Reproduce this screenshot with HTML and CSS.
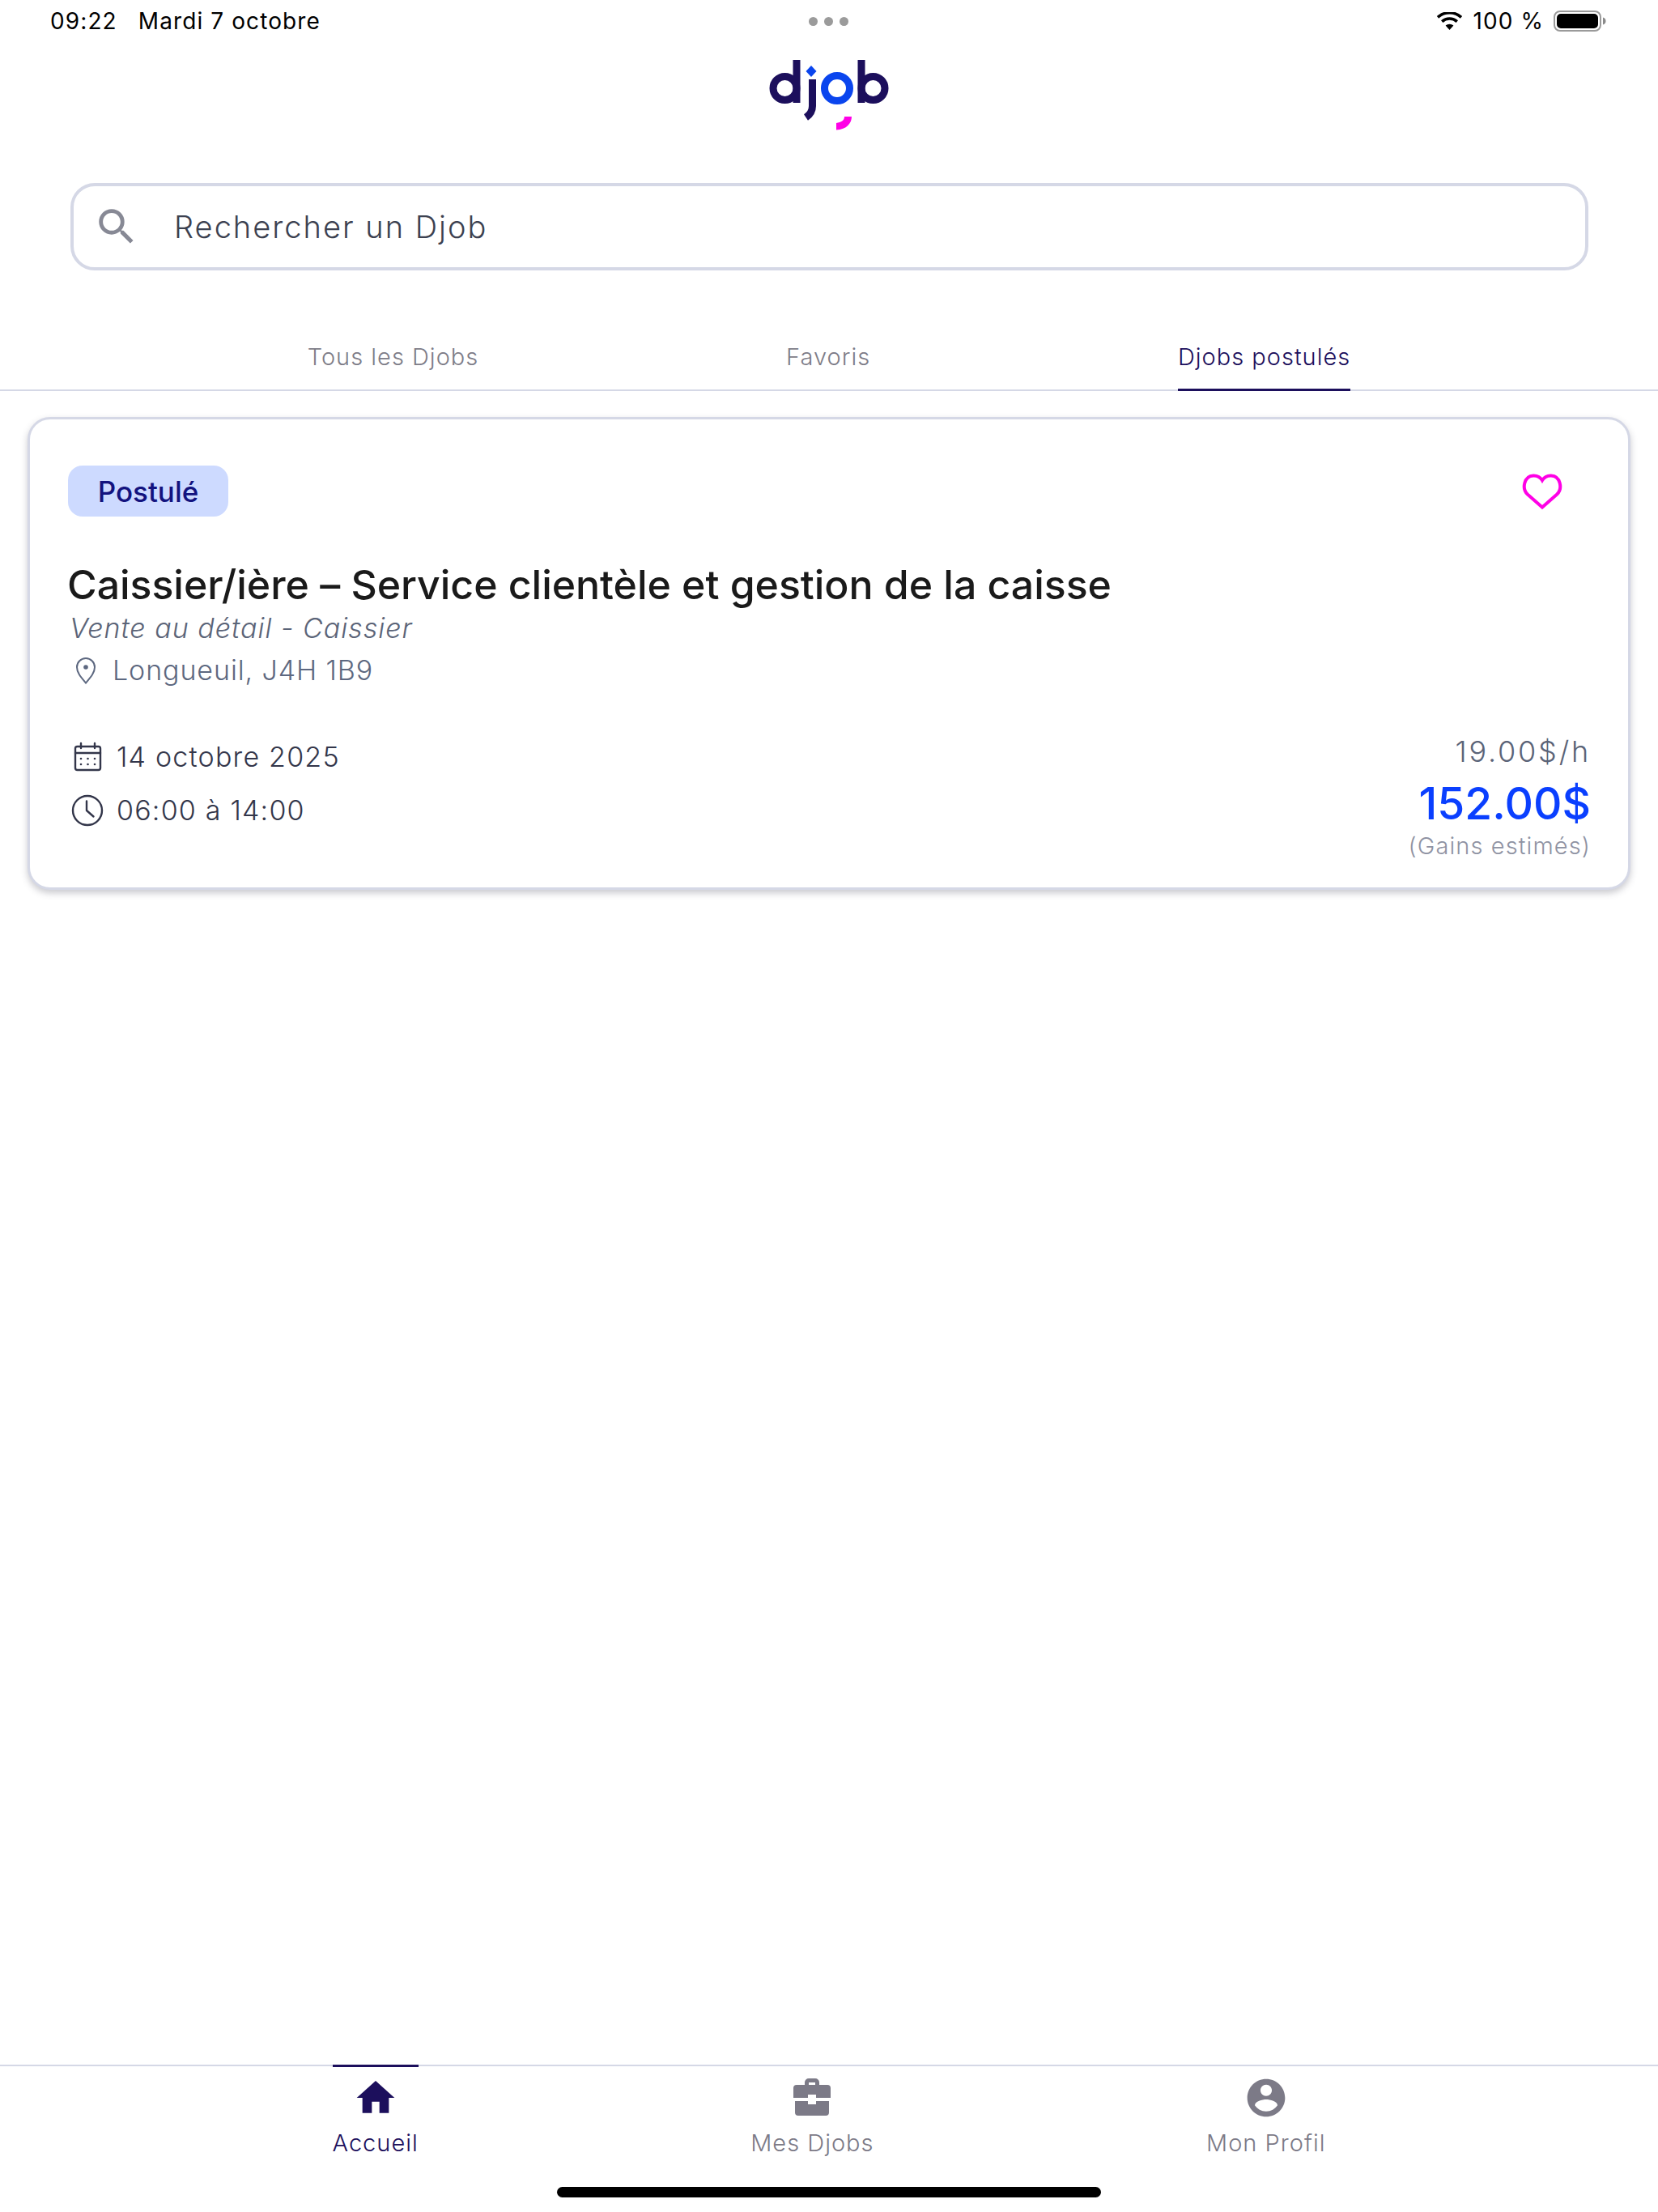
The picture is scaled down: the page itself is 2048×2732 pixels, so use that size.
FILE: index.html
```html
<!DOCTYPE html>
<html lang="fr">
<head>
<meta charset="utf-8">
<title>Djob</title>
<link rel="stylesheet" href="styles.css">
</head>
<body>
<div class="page">
  <div class="status">
    <div class="status-left"><span>09:22</span><span>Mardi 7 octobre</span></div>
    <div class="dots"><i></i><i></i><i></i></div>
    <div class="status-right">
      <svg class="wifi" viewBox="0 0 33 22"><path d="M16.5 22 11.6 16.6a7.4 7.4 0 0 1 9.8 0z" fill="#000"/><path d="M7.2 11.6a14 14 0 0 1 18.6 0" fill="none" stroke="#000" stroke-width="3.6"/><path d="M2 6.4a21.5 21.5 0 0 1 29 0" fill="none" stroke="#000" stroke-width="3.6"/></svg>
      <span>100 %</span>
      <svg class="battery" viewBox="0 0 65 26"><rect x="1" y="1" width="57" height="24" rx="7" fill="#fff" stroke="#9a9a9a" stroke-width="2"/><rect x="4" y="4" width="51" height="18" rx="5" fill="#000"/><path d="M61 8.500c2.500.8 3.500 2.500 3.500 4.500s-1 3.700-3.500 4.500z" fill="#8a8a8a"/></svg>
    </div>
  </div>

  <div class="logo-row">
    <svg class="logo" viewBox="948 70 152 95" fill="none" stroke-width="9">
      <circle cx="969.500" cy="109" r="14.500" stroke="#1c0f5c"/>
      <path d="M984 74v53" stroke="#1c0f5c"/>
      <path d="M1003.500 98v33c0 6-2 10-8 14" stroke="#1c0f5c"/>
      <path d="M1002 81l6.500 7-6.500 7-6.500-7z" fill="#0a45ee" stroke="none"/>
      <circle cx="1034" cy="109" r="15.500" stroke="#0a45ee"/>
      <path d="M1064 74v53" stroke="#1c0f5c"/>
      <circle cx="1078.500" cy="109" r="14.500" stroke="#1c0f5c"/>
      <path d="M1043 144h9c0 8-6 16-19 16.500V152c6-1 10-3 10-8z" fill="#ff00e6" stroke="none"/>
    </svg>
  </div>

  <div class="search">
    <svg class="search-icon" viewBox="0 0 24 24"><path d="M15.500 14h-.79l-.28-.27A6.471 6.471 0 0 0 16 9.500 6.500 6.500 0 1 0 9.500 16c1.610 0 3.090-.59 4.230-1.570l.27.28v.79l5 4.990L20.490 19l-4.990-5zm-6 0C7.010 14 5 11.990 5 9.500S7.010 5 9.500 5 14 7.010 14 9.500 11.990 14 9.500 14z"/></svg>
    <span class="search-text">Rechercher un Djob</span>
  </div>

  <div class="tabs">
    <div class="tab">Tous les Djobs</div>
    <div class="tab">Favoris</div>
    <div class="tab tab-active">Djobs postulés</div>
  </div>

  <main class="content">
    <article class="card">
      <div class="card-top">
        <span class="badge">Postulé</span>
        <svg class="heart" viewBox="0 0 50 46"><path d="M25 42.500 6.800 26.500C-.5 19.500 2.500 4 14 3.500c5-.2 8.800 2.200 11 5.800 2.200-3.600 6-6 11-5.800 11.500.5 14.500 16 7.200 23z"/></svg>
      </div>
      <h1 class="title">Caissier/ière – Service clientèle et gestion de la caisse</h1>
      <div class="subtitle">Vente au détail - Caissier</div>
      <div class="location">
        <svg class="pin" viewBox="0 0 26 34"><path d="M13 32.500C7 25.500 2 20 2 13a11 11 0 0 1 22 0c0 7-5 12.500-11 19.500z"/><circle cx="13" cy="13" r="2.800" class="pin-dot"/></svg>
        <span>Longueuil, J4H 1B9</span>
      </div>
      <div class="card-bottom">
        <div class="when">
          <div class="when-row">
            <svg class="when-icon" viewBox="0 0 40 36"><g class="line-icon"><rect x="5" y="5" width="31" height="29" rx="2.500"/><path d="M5 13h31M12 1v6M29 1v6"/></g><g class="cal-dots"><circle cx="12" cy="20" r="1.300"/><circle cx="20.500" cy="20" r="1.300"/><circle cx="29" cy="20" r="1.300"/><circle cx="12" cy="27" r="1.300"/><circle cx="20.500" cy="27" r="1.300"/><circle cx="29" cy="27" r="1.300"/></g></svg>
            <span>14 octobre 2025</span>
          </div>
          <div class="when-row">
            <svg class="when-icon" viewBox="0 0 40 40"><g class="line-icon"><circle cx="20" cy="20" r="18"/><path d="M19 8.500V20l8.500 7.500"/></g></svg>
            <span>06:00 à 14:00</span>
          </div>
        </div>
        <div class="pay">
          <div class="rate">19.00$/h</div>
          <div class="total">152.00$</div>
          <div class="est">(Gains estimés)</div>
        </div>
      </div>
    </article>
  </main>

  <nav class="nav">
    <div class="nav-item nav-active">
      <svg class="nav-icon" viewBox="0 0 24 24"><path d="M10 20v-6h4v6h5v-8h3L12 3 2 12h3v8z"/></svg>
      <span>Accueil</span>
    </div>
    <div class="nav-item">
      <svg class="nav-icon" viewBox="0 0 56 56"><path d="M19 12V9a5 5 0 0 1 5-5h8a5 5 0 0 1 5 5v3h10a4 4 0 0 1 4 4v12H33v-4h-10v4H5V16a4 4 0 0 1 4-4zm5 0h8V9h-8z" fill-rule="evenodd"/><path d="M7 32h16v4h10v-4h16v14a4 4 0 0 1-4 4H11a4 4 0 0 1-4-4z"/></svg>
      <span>Mes Djobs</span>
    </div>
    <div class="nav-item">
      <svg class="nav-icon" viewBox="0 0 24 24"><path d="M12 2C6.480 2 2 6.480 2 12s4.480 10 10 10 10-4.480 10-10S17.520 2 12 2zm0 3c1.660 0 3 1.340 3 3s-1.340 3-3 3-3-1.340-3-3 1.340-3 3-3zm0 14.200c-2.500 0-4.710-1.280-6-3.220.03-1.990 4-3.080 6-3.080 1.990 0 5.970 1.090 6 3.080-1.290 1.940-3.500 3.220-6 3.220z"/></svg>
      <span>Mon Profil</span>
    </div>
  </nav>
  <div class="home-indicator"></div>
</div>
</body>
</html>
```

FILE: styles.css
```css
* { box-sizing: border-box; }
html, body { margin: 0; background: #fff; }
body { font-family: Inter, "Noto Sans", sans-serif; }

.page {
  position: relative;
  width: 2048px;
  height: 2732px;
  display: flex;
  flex-direction: column;
  overflow: hidden;
}

/* status bar */
.status {
  height: 52px;
  padding: 0 64px 0 62px;
  display: grid;
  grid-template-columns: 1fr auto 1fr;
  align-items: center;
  color: #000;
  font-size: 28px;
}
.status-left { display: flex; gap: 26px; letter-spacing: 1.100px; }
.dots { display: flex; gap: 8px; }
.dots i { width: 11px; height: 11px; border-radius: 50%; background: #9b9b9b; }
.status-right { display: flex; justify-content: flex-end; align-items: center; gap: 12px; letter-spacing: 1.100px; }
.wifi { width: 33px; height: 22px; }
.battery { width: 65px; height: 26px; }

/* logo */
.logo-row { display: flex; justify-content: center; padding-top: 18px; }
.logo { width: 152px; height: 95px; display: block; }

/* search */
.search {
  margin: 61px 86px 0 87px;
  height: 108px;
  border: 4px solid #d5d8e6;
  border-radius: 30px;
  display: flex;
  align-items: center;
  padding-left: 24px;
  gap: 42px;
}
.search-icon { width: 58px; height: 58px; fill: #878995; flex: none; }
.search-text { font-size: 38px; font-weight: 300; letter-spacing: 2px; color: #3c4150; }

/* tabs */
.tabs {
  margin-top: 70px;
  height: 79px;
  display: flex;
  justify-content: space-evenly;
  border-bottom: 2px solid #d5d8e6;
}
.tab {
  font-size: 29px;
  font-weight: 300;
  letter-spacing: 1px;
  color: #7e7d88;
  padding-top: 19px;
  margin-bottom: -2px;
  border-bottom: 3px solid transparent;
}
.tab-active { color: #1c0f5c; border-bottom-color: #1c0f5c; }

/* card */
.content { flex: 1; padding: 32px 34px 0 34px; }
.card {
  height: 584px;
  border: 3px solid #d5d8e6;
  border-radius: 28px;
  box-shadow: 0 4px 8px rgba(60, 60, 80, .28);
  background: #fff;
  padding: 57px 46px 0 46px;
}
.card-top { display: flex; justify-content: space-between; align-items: center; padding-right: 35px; }
.badge {
  width: 198px;
  height: 63px;
  margin-left: 1px;
  border-radius: 18px;
  background: #cddaff;
  color: #13137f;
  font-size: 35px;
  font-weight: 500;
  display: flex;
  align-items: center;
  justify-content: center;
}
.heart { width: 50px; height: 46px; fill: none; stroke: #ff00e6; stroke-width: 4; }
.title {
  margin: 54px 0 0;
  font-size: 50px;
  line-height: 60px;
  letter-spacing: -.04px;
  font-weight: 500;
  color: #1a1a1a;
}
.subtitle {
  margin-top: 2px;
  font-size: 34px;
  font-weight: 300;
  line-height: 44px;
  font-style: italic;
  letter-spacing: 1px;
  color: #5b6478;
  padding-left: 3px;
}
.location {
  margin-top: 8px;
  display: flex;
  align-items: center;
  gap: 20px;
  font-size: 34px;
  font-weight: 300;
  line-height: 44px;
  letter-spacing: .9px;
  color: #5d6880;
  padding-left: 10px;
}
.pin { width: 26px; height: 34px; flex: none; fill: none; stroke: #5d6880; stroke-width: 2; }
.pin-dot { fill: #5d6880; stroke: none; }
.card-bottom { margin-top: 55px; display: flex; justify-content: space-between; align-items: flex-start; }
.when { display: flex; flex-direction: column; gap: 22px; padding-top: 8px; }
.when-row { display: flex; align-items: center; gap: 16px; font-size: 34px; font-weight: 300; line-height: 44px; letter-spacing: 1.200px; color: #33364a; padding-left: 5px; }
.when-icon { width: 40px; height: 40px; flex: none; }
.line-icon { fill: none; stroke: #33364a; stroke-width: 2.400; stroke-linecap: round; stroke-linejoin: round; }
.cal-dots { fill: #33364a; }
.pay { text-align: right; }
.rate { font-size: 36px; font-weight: 300; line-height: 44px; color: #5b6478; letter-spacing: 2.800px; margin-top: 1px; }
.total { font-size: 55px; line-height: 68px; font-weight: 500; color: #0a3fff; margin-top: 8px; }
.est { font-size: 29px; font-weight: 300; line-height: 38px; letter-spacing: 1.100px; color: #8f93a3; }

/* bottom nav */
.nav {
  height: 182px;
  border-top: 2px solid #d5d8e6;
  display: flex;
  justify-content: space-evenly;
  align-items: flex-start;
}
.nav-item {
  display: flex;
  flex-direction: column;
  align-items: center;
  margin-top: -2px;
  padding-top: 10px;
  border-top: 3px solid transparent;
  font-size: 29px;
  font-weight: 300;
  line-height: 36px;
  letter-spacing: 1px;
  color: #7c7a87;
}
.nav-item span { margin-top: 10px; }
.nav-icon { width: 56px; height: 56px; fill: #7c7a87; }
.nav-active { color: #1c0f5c; border-top-color: #1c0f5c; }
.nav-active .nav-icon { fill: #1c0f5c; }

.home-indicator {
  position: absolute;
  left: 688px;
  bottom: 18px;
  width: 672px;
  height: 13px;
  border-radius: 7px;
  background: #000;
}
```
